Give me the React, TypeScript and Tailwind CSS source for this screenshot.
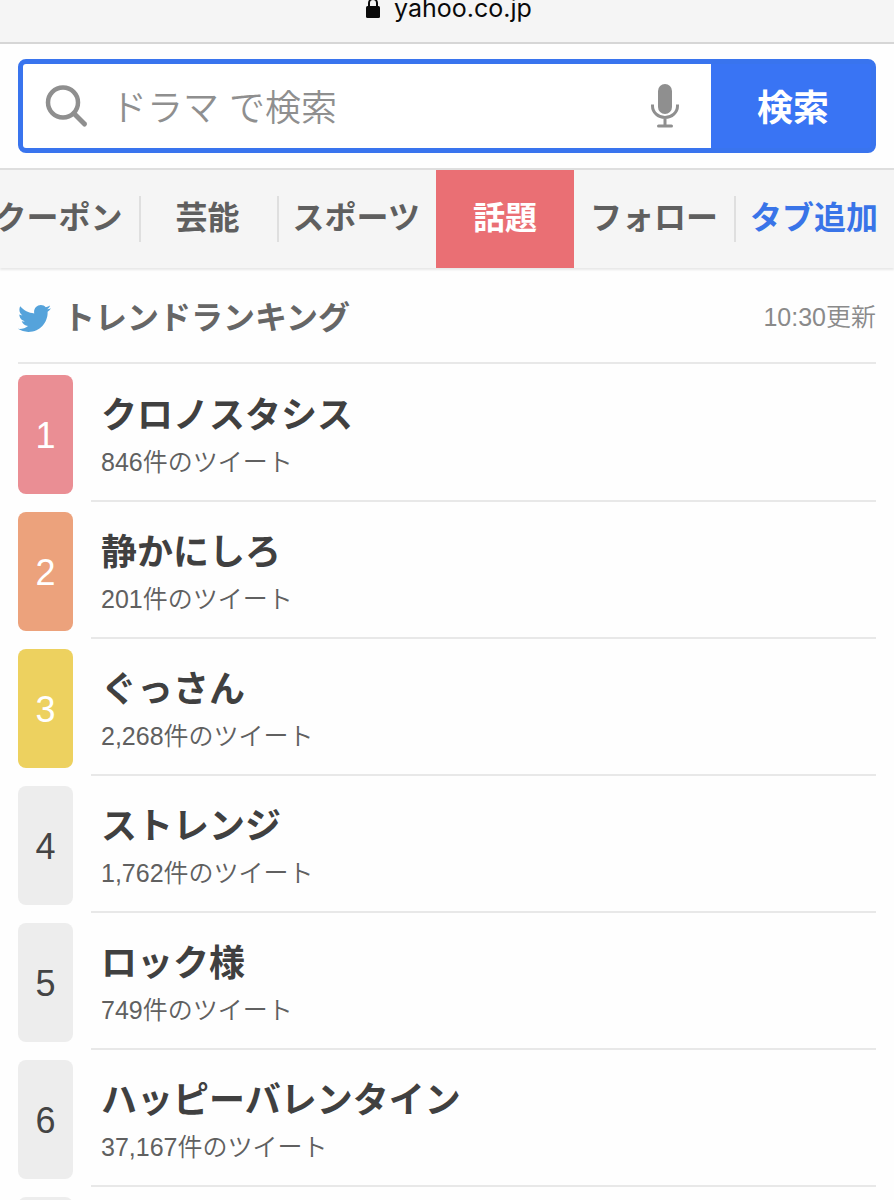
import React from "react";
import { FaTwitter } from "react-icons/fa";

type Trend = {
  name?: string;
  tweets?: string;
};

const tabs = [
  { name: "クーポン", divider: true },
  { name: "芸能", divider: true },
  { name: "スポーツ" },
  { name: "話題", active: true },
  { name: "フォロー", divider: true },
  { name: "タブ追加", accent: true },
];

const trends: Trend[] = [
  { name: "クロノスタシス", tweets: "846" },
  { name: "静かにしろ", tweets: "201" },
  { name: "ぐっさん", tweets: "2,268" },
  { name: "ストレンジ", tweets: "1,762" },
  { name: "ロック様", tweets: "749" },
  { name: "ハッピーバレンタイン", tweets: "37,167" },
  {},
];

const rankColors = [
  "bg-[#ea8e94] text-white",
  "bg-[#eca27c] text-white",
  "bg-[#edd15f] text-white",
];

const LockIcon = () => (
  <svg width="14" height="21" viewBox="0 0 14 21" aria-hidden="true">
    <path
      d="M3 10V5a4 4 0 0 1 8 0V10"
      fill="none"
      stroke="#0a0a0a"
      strokeWidth="2"
    />
    <rect y="8" width="14" height="12" rx="1.5" fill="#0a0a0a" />
  </svg>
);

const SearchIcon = () => (
  <svg width="44" height="44" viewBox="0 0 44 44" fill="none" aria-hidden="true">
    <circle cx="18" cy="18.5" r="15" stroke="#8f8f8f" strokeWidth="4.5" />
    <path
      d="M29 29.5l10.5 10.5"
      stroke="#8f8f8f"
      strokeWidth="5"
      strokeLinecap="round"
    />
  </svg>
);

const MicIcon = () => (
  <svg width="28" height="44" viewBox="0 0 28 44" fill="none" aria-hidden="true">
    <rect x="7" width="14" height="30" rx="7" fill="#8f8f8f" />
    <path
      d="M1.5 20.5v1.5a12.5 11.5 0 0 0 25 0v-1.5M14 34v8"
      stroke="#8f8f8f"
      strokeWidth="3"
    />
    <path
      d="M7.5 42h13"
      stroke="#8f8f8f"
      strokeWidth="3"
      strokeLinecap="round"
    />
  </svg>
);

const AddressBar = () => (
  <div className="flex h-11 items-start justify-center border-b-2 border-[#d6d6d6] bg-[#f5f5f5] pl-1">
    <div className="flex h-4 items-center gap-3.5">
      <LockIcon />
      <span className="font-['Inter',sans-serif] text-[25px] leading-4 text-[#0a0a0a]">
        yahoo.co.jp
      </span>
    </div>
  </div>
);

const SearchBox = () => (
  <form
    className="mx-[18px] my-[15px] flex h-[94px] overflow-hidden rounded-lg border-[5px] border-[#3974ee] bg-[#3974f4]"
    onSubmit={(e) => e.preventDefault()}
  >
    <div className="flex min-w-0 grow items-center bg-white pl-[22px] pr-8">
      <SearchIcon />
      <input
        type="text"
        aria-label="検索"
        placeholder="ドラマ で検索"
        className="h-full min-w-0 grow px-[22px] pt-1.5 text-[36px] font-[350] outline-none placeholder:text-[#8f8f8f]"
      />
      <button type="button" aria-label="音声検索">
        <MicIcon />
      </button>
    </div>
    <button
      type="submit"
      className="w-40 shrink-0 pl-1 pt-1.5 text-[36px] font-bold text-white"
    >
      検索
    </button>
  </form>
);

const Tabs = () => (
  <nav className="overflow-hidden border-t-2 border-[#dedede] bg-[#f5f5f5] shadow-[0_2px_2px_#e8e8e8]">
    <ul className="flex h-[98px] justify-end">
      {tabs.map(({ name, divider, active, accent }) => (
        <li key={name} className="min-w-[138px] shrink-0">
          <a
            href="#"
            className={`flex h-full items-center text-[32px] font-bold ${
              active
                ? "bg-[#ea6f74] text-white"
                : accent
                  ? "text-[#3974e8]"
                  : "text-[#5f5f5f]"
            }`}
          >
            <span
              className={`flex h-[46px] w-full items-center justify-center px-4 pb-0.5 ${
                divider ? "shadow-[2px_0_0_#dfdfdf]" : ""
              }`}
            >
              {name}
            </span>
          </a>
        </li>
      ))}
    </ul>
  </nav>
);

const TrendRow = ({ trend, rank }: { trend: Trend; rank: number }) => (
  <li className="flex gap-[18px]">
    <span
      className={`mt-2.5 flex h-[119px] w-[55px] shrink-0 items-center justify-center rounded-lg pt-0.5 font-['Liberation_Sans',sans-serif] text-[36px] ${
        rankColors[rank - 1] ?? "bg-[#ededed] text-[#444]"
      }`}
    >
      {trend.name && rank}
    </span>
    <a
      href="#"
      className="flex h-[137px] grow flex-col border-b-2 border-[#e8e8e8] pl-2.5 pt-6"
    >
      {trend.name && (
        <>
          <span className="text-[36px] font-bold leading-[54px] text-[#404040]">
            {trend.name}
          </span>
          <span className="text-[25px] font-[350] leading-[38px] text-[#606060]">
            {trend.tweets}件のツイート
          </span>
        </>
      )}
    </a>
  </li>
);

const App = () => {
  return (
    <div
      lang="ja"
      className="h-screen overflow-hidden bg-[#fefefe] font-['Liberation_Sans','Noto_Sans_CJK_JP',sans-serif]"
    >
      <AddressBar />
      <SearchBox />
      <Tabs />
      <main className="px-[18px]">
        <header className="flex h-24 items-center border-b-2 border-[#e8e8e8] pt-1.5">
          <FaTwitter size={33} className="text-[#55a3db]" />
          <h1 className="ml-3 text-[32px] font-bold text-[#666]">
            トレンドランキング
          </h1>
          <time className="ml-auto text-[25px] font-[350] text-[#8a8a8a]">
            10:30更新
          </time>
        </header>
        <ol className="pt-px">
          {trends.map((trend, idx) => (
            <TrendRow key={idx} trend={trend} rank={idx + 1} />
          ))}
        </ol>
      </main>
    </div>
  );
};

export default App;
